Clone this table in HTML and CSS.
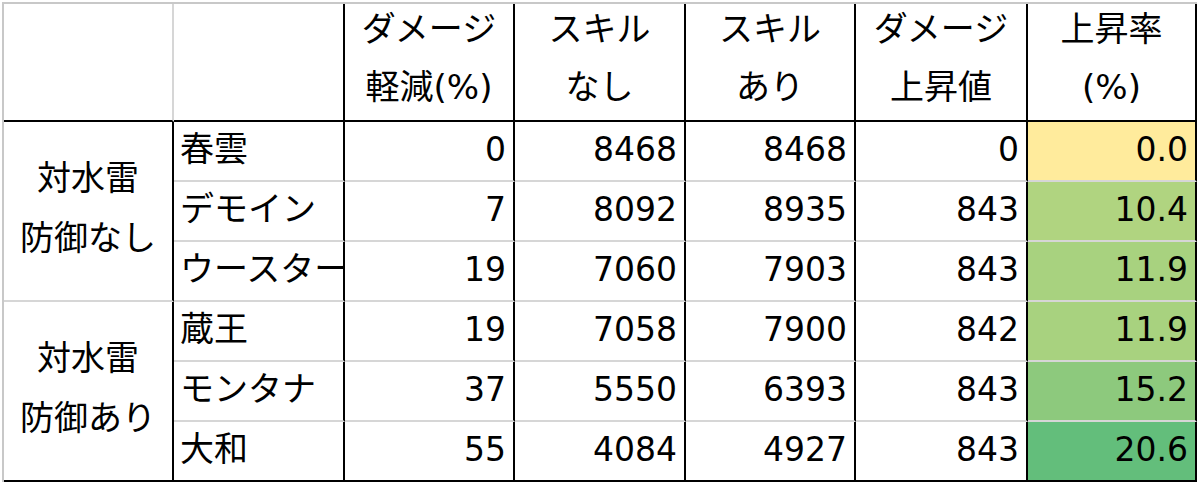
FILE: index.html
```html
<!DOCTYPE html>
<html lang="ja">
<head>
<meta charset="utf-8">
<title>ダメージ比較</title>
<link rel="stylesheet" href="styles.css">
</head>
<body>
<div class="sheet">
  <div class="c hd hd-blank first"></div>
  <div class="c hd hd-blank"></div>
  <div class="c hd"><span>ダメージ</span><span>軽減(%)</span></div>
  <div class="c hd"><span>スキル</span><span>なし</span></div>
  <div class="c hd"><span>スキル</span><span>あり</span></div>
  <div class="c hd"><span>ダメージ</span><span>上昇値</span></div>
  <div class="c hd"><span>上昇率</span><span>(%)</span></div>

  <div class="c grp"><span>対水雷</span><span>防御なし</span></div>
  <div class="c name">春雲</div>
  <div class="c num">0</div>
  <div class="c num">8468</div>
  <div class="c num">8468</div>
  <div class="c num">0</div>
  <div class="c num rate" style="background:#ffeb9c">0.0</div>

  <div class="c name">デモイン</div>
  <div class="c num">7</div>
  <div class="c num">8092</div>
  <div class="c num">8935</div>
  <div class="c num">843</div>
  <div class="c num rate" style="background:#b0d480">10.4</div>

  <div class="c name">ウースター</div>
  <div class="c num">19</div>
  <div class="c num">7060</div>
  <div class="c num">7903</div>
  <div class="c num">843</div>
  <div class="c num rate" style="background:#a8d27f">11.9</div>

  <div class="c grp last"><span>対水雷</span><span>防御あり</span></div>
  <div class="c name">蔵王</div>
  <div class="c num">19</div>
  <div class="c num">7058</div>
  <div class="c num">7900</div>
  <div class="c num">842</div>
  <div class="c num rate" style="background:#a8d27f">11.9</div>

  <div class="c name">モンタナ</div>
  <div class="c num">37</div>
  <div class="c num">5550</div>
  <div class="c num">6393</div>
  <div class="c num">843</div>
  <div class="c num rate" style="background:#8dc97d">15.2</div>

  <div class="c name last">大和</div>
  <div class="c num last">55</div>
  <div class="c num last">4084</div>
  <div class="c num last">4927</div>
  <div class="c num last">843</div>
  <div class="c num rate last" style="background:#63be7b">20.6</div>
</div>
</body>
</html>
```
FILE: styles.css
```css
html, body {
  margin: 0;
  padding: 0;
  background: #ffffff;
}

body {
  width: 1200px;
  height: 486px;
  overflow: hidden;
  font-family: "Noto Sans CJK JP", "Noto Sans", sans-serif;
  font-size: 34px;
  color: #000;
}

.sheet {
  display: grid;
  grid-template-columns: 170px 171px 170px 171px 170px 172px 169px;
  grid-template-rows: 118px repeat(6, 60px);
  margin: 2px 0 0 2px;
  width: max-content;
  border-top: 2px solid #c8c8c8;
  border-left: 2px solid #c8c8c8;
}

.c {
  box-sizing: border-box;
  border-right: 2px solid #000;
  border-bottom: 2px solid #d6d6d6;
  overflow: hidden;
  white-space: nowrap;
  line-height: 50px;
}

.hd {
  display: flex;
  flex-direction: column;
  align-items: center;
  justify-content: center;
  padding-bottom: 9px;
  line-height: 58px;
  font-family: "DejaVu Sans", "Noto Sans CJK JP", sans-serif;
  border-bottom-color: #000;
}

.hd-blank.first {
  border-right-color: #d6d6d6;
}

.grp {
  grid-row: span 3;
  display: flex;
  flex-direction: column;
  align-items: center;
  justify-content: center;
  padding-bottom: 10px;
  line-height: 60px;
}

.grp.last,
.c.last {
  border-bottom-color: #000;
}

.name {
  padding-left: 6px;
}

.num {
  text-align: right;
  padding-right: 7px;
  font-family: "DejaVu Sans", "Liberation Sans", sans-serif;
  font-size: 33px;
  line-height: 56px;
}
```
